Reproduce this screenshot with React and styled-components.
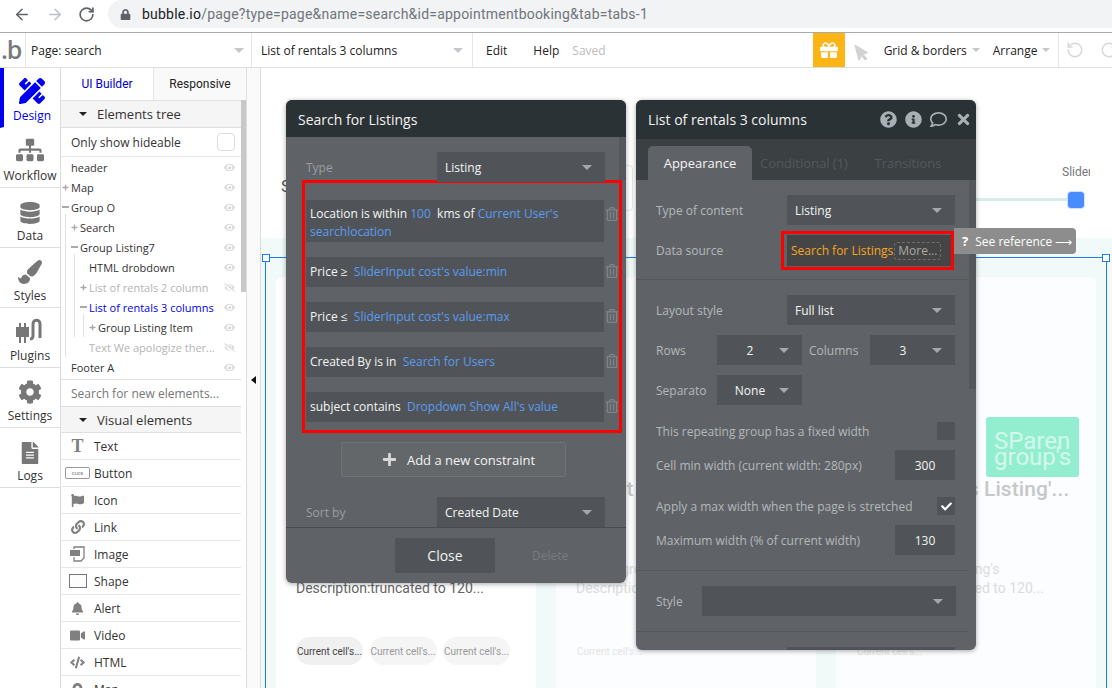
import React from 'react'
import styled, { createGlobalStyle } from 'styled-components'
import { ArrowLeft, ArrowRight, RotateCw, RotateCcw } from 'lucide-react'
import {
  FaPencilRuler, FaSitemap, FaDatabase, FaPaintBrush, FaCog, FaFileAlt, FaEye, FaEyeSlash,
  FaFlag, FaLink, FaBell, FaVideo, FaCode, FaMapMarkerAlt, FaRegTrashAlt, FaQuestionCircle,
  FaInfoCircle, FaRegComment, FaTimes, FaCheck, FaGift, FaMousePointer, FaPlus, FaLock,
} from 'react-icons/fa'

const Global = createGlobalStyle`
html, body { margin: 0; padding: 0; overflow: hidden; background: #fff; }
* { box-sizing: border-box; }
#root { width: 1112px; height: 688px; overflow: hidden; font-family: "Open Sans", "Liberation Sans", sans-serif; font-size: 12px; color: #333; }
`

const Page = styled.div`
width: 1112px;
height: 688px;
display: flex;
flex-direction: column;
overflow: hidden;
`

/* browser bar */
const Chrome = styled.div`
height: 33px;
flex: none;
display: flex;
align-items: flex-start;
padding-left: 13px;
border-bottom: 1px solid #aaa;
background: #fff;
`
const NavIcon = styled.div`
width: 18px;
height: 28px;
margin-right: ${p => p.$gap}px;
display: flex;
align-items: center;
justify-content: center;
color: ${p => p.$color};
`
const Address = styled.div`
flex: 1;
height: 28px;
margin-left: 13px;
padding-left: 12px;
display: flex;
align-items: center;
gap: 11px;
background: #f1f3f4;
border-radius: 14px 0 0 14px;
color: #5f6368;
`
const Url = styled.span`
font-family: Roboto, "Liberation Sans", sans-serif;
font-size: 14px;
letter-spacing: 0.22px;
color: #70757a;
b { font-weight: 400; color: #202124; }
`

/* bubble toolbar */
const Toolbar = styled.div`
height: 35px;
flex: none;
display: flex;
align-items: center;
overflow: hidden;
white-space: nowrap;
border-bottom: 1px solid #ddd;
background: #fff;
color: #222;
& > * { flex: none; }
`
const Logo = styled.div`
width: 26px;
height: 34px;
border-right: 1px solid #e5e5e5;
font-size: 25px;
line-height: 32px;
font-weight: 600;
color: #77797b;
letter-spacing: -1px;
padding-left: 1px;
`
const Caret = styled.i`
display: block;
flex: none;
width: 0;
height: 0;
border-left: ${p => p.$w || 5}px solid transparent;
border-right: ${p => p.$w || 5}px solid transparent;
border-top: ${p => p.$w || 5}px solid ${p => p.$color || '#c4c8cc'};
`
const ToolSelect = styled.div`
width: ${p => p.$w}px;
height: 34px;
padding: 0 ${p => p.$pr}px 0 ${p => p.$pl}px;
display: flex;
align-items: center;
justify-content: space-between;
border-right: 1px solid #e5e5e5;
`
const MenuItem = styled.span`
margin-left: ${p => p.$ml}px;
color: ${p => p.$color || '#222'};
`
const GiftBox = styled.div`
width: 32px;
height: 34px;
margin-left: ${p => p.$ml}px;
display: flex;
align-items: center;
justify-content: center;
background: #fdb515;
color: #fff;
font-size: 18px;
`
const CursorIcon = styled.div`
width: 20px;
margin: 3px 0 0 8px;
color: #d2d2d2;
font-size: 18px;
display: flex;
svg { transform: rotate(-15deg); }
`
const ToolDrop = styled.div`
margin-left: ${p => p.$ml}px;
display: flex;
align-items: center;
gap: 5px;
`
const History = styled.div`
height: 34px;
margin-left: 8px;
padding-left: 7px;
display: flex;
align-items: center;
gap: 16px;
border-left: 1px solid #e5e5e5;
color: #d8d8d8;
svg { flex: none; }
`

const Main = styled.div`
flex: 1;
min-height: 0;
display: flex;
`

/* left rail */
const Rail = styled.nav`
width: 61px;
flex: none;
border-right: 1px solid #ddd;
`
const RailItem = styled.div`
height: 60px;
display: flex;
flex-direction: column;
align-items: center;
justify-content: flex-end;
padding-bottom: 3px;
border-bottom: 1px solid ${p => p.$active ? 'transparent' : '#ddd'};
border-left: ${p => p.$active ? '4px solid #0000ee' : 'none'};
color: ${p => p.$active ? '#0000ee' : '#333'};
svg { color: ${p => p.$active ? '#0000ee' : '#777'}; margin-bottom: 3px; }
`

/* left panel */
const Panel = styled.aside`
width: 186px;
flex: none;
position: relative;
border-right: 1px solid #ddd;
overflow: hidden;
`
const PanelTabs = styled.div`
height: 33px;
display: flex;
border-bottom: 1px solid #e0e0e0;
`
const PanelTab = styled.div`
flex: 1;
display: flex;
align-items: center;
justify-content: center;
font-family: Roboto, "Liberation Sans", sans-serif;
color: ${p => p.$active ? '#0000cc' : '#222'};
background: ${p => p.$active ? '#fff' : '#f9f9f9'};
border-left: ${p => p.$active ? 'none' : '1px solid #e5e5e5'};
`
const PanelBody = styled.div`
width: 180px;
`
const SectionHead = styled.div`
height: ${p => p.$h}px;
display: flex;
align-items: center;
gap: 10px;
padding-left: 18px;
background: #f5f5f5;
border-bottom: 1px solid #e0e0e0;
font-size: 13px;
color: #333;
`
const HideRow = styled.div`
height: 29px;
display: flex;
align-items: center;
justify-content: space-between;
padding: 0 6px 0 10px;
border-bottom: 1px solid #e8e8e8;
`
const HideBox = styled.span`
width: 18px;
height: 18px;
border: 1px solid #ddd;
border-radius: 4px;
background: #fff;
`
const Tree = styled.div`
height: 223px;
position: relative;
border-bottom: 1px solid #ddd;
`
const Branch = styled.div`
position: relative;
&::before {
  content: "";
  position: absolute;
  left: ${p => p.$x}px;
  top: -3px;
  bottom: ${p => p.$bottom || 0}px;
  width: 1px;
  background: #e2e2e2;
}
`
const TreeRow = styled.div`
height: 20px;
display: flex;
align-items: center;
padding: 0 6px 0 ${p => 1 + p.$level * 9}px;
font-size: 11px;
color: ${p => p.$tone === 'off' ? '#b4b4b4' : p.$tone === 'on' ? '#0000ee' : '#333'};
`
const Toggle = styled.span`
width: 9px;
flex: none;
display: flex;
color: #aaa;
font-size: 7px;
`
const Minus = styled.i`
display: block;
width: 7px;
height: 2px;
background: #aaa;
`
const TreeName = styled.span`
flex: 1;
white-space: nowrap;
overflow: hidden;
`
const EyeWrap = styled.span`
display: flex;
font-size: 11px;
color: #dcdcdc;
`
const NewSearch = styled.div`
height: 27px;
display: flex;
align-items: center;
padding-left: 10px;
border-bottom: 1px solid #ddd;
color: #777;
`
const ElementRow = styled.div`
height: 27px;
display: flex;
align-items: center;
border-bottom: 1px solid #e8e8e8;
color: #333;
`
const ElementIcon = styled.span`
width: 33px;
flex: none;
display: flex;
justify-content: center;
color: #808080;
font-size: 13px;
`
const SerifT = styled.span`
font-family: "Liberation Serif", serif;
font-weight: 700;
font-size: 18px;
line-height: 18px;
color: #808080;
`
const ClickBtn = styled.span`
width: 25px;
height: 12px;
display: flex;
align-items: center;
justify-content: center;
border: 1px solid #999;
border-radius: 2px;
font-size: 4px;
font-weight: 700;
color: #888;
`
const ShapeBox = styled.span`
width: 18px;
height: 14px;
border: 1px solid #777;
background: #fdfdfd;
`
const Scrollbar = styled.div`
position: absolute;
left: 180px;
top: 32px;
width: 5px;
height: 192px;
background: #c8c8c8;
`

const Strip = styled.div`
width: 14px;
flex: none;
display: flex;
align-items: flex-start;
justify-content: center;
padding-top: 308px;
background: #fafafa;
border-right: 1px solid #ddd;
`
const CollapseArrow = styled.i`
display: block;
width: 0;
height: 0;
border-top: 4px solid transparent;
border-bottom: 4px solid transparent;
border-right: 5px solid #111;
`

/* editor canvas */
const Canvas = styled.div`
flex: 1;
position: relative;
overflow: hidden;
background: #fff;
`
const SearchLabel = styled.div`
position: absolute;
left: 20px;
top: 109px;
font-family: Roboto, "Liberation Sans", sans-serif;
font-size: 16px;
color: #555;
`
const SearchField = styled.div`
position: absolute;
left: 150px;
top: 97px;
width: 222px;
height: 46px;
border: 1px solid #dcebe8;
border-radius: 4px;
`
const SliderLabel = styled.div`
position: absolute;
left: 801px;
top: 97px;
width: 28px;
overflow: hidden;
white-space: nowrap;
font-family: Roboto, "Liberation Sans", sans-serif;
color: #777;
`
const SliderTrack = styled.div`
position: absolute;
left: 700px;
top: 130px;
width: 110px;
height: 3px;
background: #d5eeea;
`
const SliderThumb = styled.div`
position: absolute;
left: 806px;
top: 123px;
width: 18px;
height: 18px;
border: 1px solid #cfe3ff;
border-radius: 4px;
background: #4a8cff;
`
const PageRegion = styled.div`
position: absolute;
left: 0;
right: 0;
top: 170px;
bottom: 0;
padding: 39px 0 0 15px;
display: flex;
gap: 20px;
background: #f2faf9;
`
const Card = styled.div`
width: 260px;
height: 500px;
padding-left: 20px;
flex: none;
border-radius: 6px 6px 0 0;
background: ${p => p.$faded ? '#fbfdfe' : '#fff'};
font-family: Roboto, "Liberation Sans", sans-serif;
`
const CardLogo = styled.div`
width: 93px;
height: 60px;
margin: 140px 0 0 130px;
padding: 16px 8px 0;
overflow: hidden;
border-radius: 3px;
background: #93eed0;
color: rgba(255, 255, 255, 0.6);
font-size: 24px;
line-height: 16px;
white-space: nowrap;
`
const CardTitle = styled.div`
height: 25px;
margin-left: ${p => p.$shift || 0}px;
font-size: 21px;
line-height: 25px;
font-weight: 500;
letter-spacing: 0.08px;
color: ${p => p.$faded ? '#c6c8c8' : '#555'};
white-space: nowrap;
`
const CardDesc = styled.div`
margin-top: 58px;
font-size: 14px;
line-height: 19px;
color: ${p => p.$faded ? '#dcdcdc' : '#666'};
white-space: nowrap;
`
const ChipRow = styled.div`
margin-top: 39px;
display: flex;
gap: 6.5px;
`
const Chip = styled.div`
width: 67px;
height: 28px;
display: flex;
align-items: center;
justify-content: center;
border-radius: 14px;
font-size: 10px;
background: ${p => p.$first ? '#f0f0f0' : p.$faded ? 'transparent' : '#f5f5f5'};
color: ${p => p.$faded ? '#e4e4e4' : p.$first ? '#444' : '#999'};
`
const Frame = styled.div`
position: absolute;
left: 4px;
top: 189px;
width: 842px;
height: 600px;
border: 1px solid #1a7fe8;
`
const Handle = styled.i`
position: absolute;
top: -4px;
${p => p.$side}: -4px;
width: 8px;
height: 8px;
border: 1px solid #1a7fe8;
background: #fff;
`

/* floating palettes */
const Palette = styled.section`
position: absolute;
left: ${p => p.$left}px;
top: 32px;
width: 340px;
height: ${p => p.$h}px;
display: flex;
flex-direction: column;
overflow: hidden;
border-radius: 6px;
background: #5f6367;
box-shadow: 0 1px 5px rgba(0, 0, 0, 0.35);
`
const PaletteHead = styled.header`
height: ${p => p.$h}px;
flex: none;
display: flex;
align-items: center;
justify-content: space-between;
padding: ${p => p.$pt || 0}px 4px 0 12px;
background: #2b3235;
color: #f2f2f2;
font-size: 14px;
`
const HeadIcons = styled.div`
display: flex;
align-items: center;
gap: 8px;
color: #a9b0b5;
font-size: 17px;
svg { display: block; }
`
const PaletteTabs = styled.div`
height: 41px;
flex: none;
display: flex;
align-items: flex-end;
padding-left: 12px;
background: #3b4043;
`
const PaletteTab = styled.div`
height: 34px;
width: ${p => p.$w}px;
margin-left: ${p => p.$ml || 0}px;
display: flex;
align-items: center;
justify-content: center;
border-radius: 5px 5px 0 0;
font-size: 13px;
background: ${p => p.$active ? '#5f6367' : 'transparent'};
color: ${p => p.$active ? '#f4f4f4' : '#54595c'};
`
const PaletteBody = styled.div`
flex: 1;
min-height: 0;
overflow: hidden;
padding: ${p => p.$top}px 21px 0 20px;
`
const PaletteThumb = styled.div`
position: absolute;
left: 333px;
top: ${p => p.$top}px;
width: 7px;
height: ${p => p.$h}px;
background: #54585b;
`
const Field = styled.div`
display: flex;
align-items: center;
justify-content: ${p => p.$justify || 'space-between'};
margin-top: ${p => p.$top || 0}px;
`
const FieldLabel = styled.span`
width: ${p => p.$w ? p.$w + 'px' : 'auto'};
margin-left: ${p => p.$ml || 0}px;
flex: none;
color: ${p => p.$dim ? '#9a9ea1' : '#b4b8bb'};
white-space: nowrap;
`
const Select = styled.div`
width: ${p => p.$w}px;
height: 30px;
flex: none;
margin-right: ${p => p.$mr || 0}px;
padding: 0 13px 0 ${p => p.$center ? 4 : 8}px;
display: flex;
align-items: center;
justify-content: space-between;
background: #505458;
color: #f4f4f4;
`
const SelectValue = styled.span`
flex: ${p => p.$center ? 1 : '0 1 auto'};
text-align: ${p => p.$center ? 'center' : 'left'};
`
const NumberBox = styled.div`
width: 60px;
height: 30px;
display: flex;
align-items: center;
justify-content: center;
background: #505458;
color: #f4f4f4;
`
const CheckBox = styled.div`
width: 18px;
height: 18px;
display: flex;
align-items: center;
justify-content: center;
background: #505458;
color: #fff;
font-size: 11px;
`
const Divider = styled.hr`
height: 1px;
margin: ${p => p.$top}px -14px 0 -20px;
border: 0;
background: #54585b;
`
const ConstraintBox = styled.div`
width: 320px;
height: 253px;
margin: -2px 0 0 -4px;
padding: 17px 0 0 1px;
display: flex;
flex-direction: column;
gap: 15px;
border: 3px solid #f00;
`
const ConstraintRow = styled.div`
display: flex;
align-items: flex-start;
`
const ConstraintText = styled.div`
width: 298px;
min-height: 30px;
padding: ${p => p.$tall ? '5px 4px 1px' : '6px 4px'};
background: #505458;
color: #f4f4f4;
line-height: 18px;
span { color: #5b9cf0; }
`
const TrashWrap = styled.span`
margin: 7px 0 0 1px;
display: flex;
color: #7f8487;
font-size: 14px;
`
const AddButton = styled.div`
width: 225px;
height: 35px;
margin: 9px 0 0 35px;
padding-left: 10px;
display: flex;
align-items: center;
justify-content: center;
gap: 10px;
border: 1px solid #6f7376;
border-radius: 2px;
background: #63676a;
color: #f2f2f2;
font-size: 13px;
svg { color: #d8d8d8; font-size: 15px; }
`
const PaletteFoot = styled.footer`
height: 56px;
flex: none;
display: flex;
align-items: flex-start;
padding: 10px 0 0 109px;
border-top: 1px solid #484c4f;
`
const CloseButton = styled.div`
width: 100px;
height: 35px;
display: flex;
align-items: center;
justify-content: center;
background: #505458;
color: #f2f2f2;
font-size: 14px;
`
const DeleteLabel = styled.span`
margin: 9px 0 0 37px;
color: #777b7e;
`
const SourceBox = styled.div`
width: 173px;
height: 39px;
margin-right: 1px;
padding: 1px 0 1px 3px;
border: 3px solid #f00;
`
const SourceValue = styled.div`
height: 100%;
padding-left: 4px;
display: flex;
align-items: center;
background: #454545;
color: #f5a623;
`
const MoreTag = styled.span`
height: 18px;
margin-left: 1px;
padding: 0 3px;
display: flex;
align-items: center;
border: 1px dashed #6e6e6e;
border-radius: 3px;
color: #a8a8a8;
`
const Tooltip = styled.div`
position: absolute;
left: 693px;
top: 160px;
width: 122px;
height: 26px;
display: flex;
align-items: center;
gap: 7px;
padding-left: 8px;
border-radius: 0 4px 4px 0;
background: #8d8d8d;
color: #fff;
b { font-size: 13px; }
`

const PlugIcon = () => (
  <svg width="30" height="26" viewBox="0 0 30 26" fill="none">
    <path d="M1 9h13v10H11v6H9v-6H6v6H4v-6H1z" fill="#777" />
    <path d="M5 9V5M10 9V5" stroke="#777" strokeWidth="2" />
    <path d="M15 21c3 0 3-2 3-5V6c0-5 7-5 7 0v14" stroke="#777" strokeWidth="3" />
  </svg>
)

const ImageIcon = () => (
  <svg width="18" height="16" viewBox="0 0 18 16" fill="none">
    <path d="M5 3V1h10v11l-3 3H5v-4" stroke="#808080" strokeWidth="1.3" />
    <rect x="1" y="4" width="10" height="6" fill="#808080" />
  </svg>
)

const railItems = [
  { label: 'Design', icon: <FaPencilRuler size={26} />, active: true },
  { label: 'Workflow', icon: <FaSitemap size={28} /> },
  { label: 'Data', icon: <FaDatabase size={22} /> },
  { label: 'Styles', icon: <FaPaintBrush size={24} /> },
  { label: 'Plugins', icon: <PlugIcon /> },
  { label: 'Settings', icon: <FaCog size={24} /> },
  { label: 'Logs', icon: <FaFileAlt size={22} /> },
]

const elements = [
  ['Text', <SerifT>T</SerifT>],
  ['Button', <ClickBtn>CLICK</ClickBtn>],
  ['Icon', <FaFlag />],
  ['Link', <FaLink size={14} />],
  ['Image', <ImageIcon />],
  ['Shape', <ShapeBox />],
  ['Alert', <FaBell />],
  ['Video', <FaVideo size={15} />],
  ['HTML', <FaCode size={15} />],
  ['Map', <FaMapMarkerAlt />],
]

const Row = ({ level = 0, mark, tone, hidden, children }) => (
  <TreeRow $level={level} $tone={tone}>
    <Toggle>{mark === '+' ? <FaPlus /> : mark === '-' ? <Minus /> : null}</Toggle>
    <TreeName>{children}</TreeName>
    <EyeWrap>{hidden ? <FaEyeSlash /> : <FaEye />}</EyeWrap>
  </TreeRow>
)

const Drop = ({ w, children, center, mr }) => (
  <Select $w={w} $center={center} $mr={mr}>
    <SelectValue $center={center}>{children}</SelectValue>
    <Caret $color="#a3a8ac" />
  </Select>
)

const Constraint = ({ tall, children }) => (
  <ConstraintRow>
    <ConstraintText $tall={tall}>{children}</ConstraintText>
    <TrashWrap><FaRegTrashAlt /></TrashWrap>
  </ConstraintRow>
)

const ListingCard = ({ faded, first, line, shift }) => (
  <Card $faded={faded}>
    <CardLogo>SParen<br />group's</CardLogo>
    <CardTitle $faded={faded} $shift={shift}>Current cell's Listing'...</CardTitle>
    <CardDesc $faded={faded}>
      {line}<br />
      Description:truncated to 120...
    </CardDesc>
    <ChipRow>
      <Chip $first={first} $faded={faded}>Current cell's...</Chip>
      <Chip $faded={faded}>{faded ? '' : "Current cell's..."}</Chip>
      <Chip $faded={faded}>{faded ? '' : "Current cell's..."}</Chip>
    </ChipRow>
  </Card>
)

const App = () => {
  return (
    <Page>
      <Global />
      <Chrome>
        <NavIcon $gap={15} $color="#5f6368"><ArrowLeft size={19} /></NavIcon>
        <NavIcon $gap={13} $color="#bdc1c6"><ArrowRight size={19} /></NavIcon>
        <NavIcon $gap={0} $color="#5f6368"><RotateCw size={17} strokeWidth={2.4} /></NavIcon>
        <Address>
          <FaLock size={11} />
          <Url><b>bubble.io</b>/page?type=page&amp;name=search&amp;id=appointmentbooking&amp;tab=tabs-1</Url>
        </Address>
      </Chrome>

      <Toolbar>
        <Logo>.b</Logo>
        <ToolSelect $w={226} $pl={5} $pr={7}>Page: search<Caret /></ToolSelect>
        <ToolSelect $w={221} $pl={9} $pr={9}>List of rentals 3 columns<Caret /></ToolSelect>
        <MenuItem $ml={13}>Edit</MenuItem>
        <MenuItem $ml={26}>Help</MenuItem>
        <MenuItem $ml={13} $color="#bbb">Saved</MenuItem>
        <GiftBox $ml={207}><FaGift /></GiftBox>
        <CursorIcon><FaMousePointer /></CursorIcon>
        <ToolDrop $ml={11}>Grid &amp; borders<Caret $w={4} /></ToolDrop>
        <ToolDrop $ml={13}>Arrange<Caret $w={4} /></ToolDrop>
        <History><RotateCcw size={18} /><RotateCw size={18} /></History>
      </Toolbar>

      <Main>
        <Rail>
          {railItems.map(item => (
            <RailItem key={item.label} $active={item.active}>
              {item.icon}
              {item.label}
            </RailItem>
          ))}
        </Rail>

        <Panel>
          <PanelTabs>
            <PanelTab $active>UI Builder</PanelTab>
            <PanelTab>Responsive</PanelTab>
          </PanelTabs>
          <PanelBody>
            <SectionHead $h={27}><Caret $w={4} $color="#222" />Elements tree</SectionHead>
            <HideRow>Only show hideable<HideBox /></HideRow>
            <Tree>
              <Row>header</Row>
              <Row mark="+">Map</Row>
              <Row mark="-">Group O</Row>
              <Branch $x={4} $bottom={0}>
                <Row level={1} mark="+">Search</Row>
                <Row level={1} mark="-">Group Listing7</Row>
                <Branch $x={13} $bottom={20}>
                  <Row level={2}>HTML drobdown</Row>
                  <Row level={2} mark="+" tone="off" hidden>List of rentals 2 column</Row>
                  <Row level={2} mark="-" tone="on">List of rentals 3 columns</Row>
                  <Branch $x={22} $bottom={0}>
                    <Row level={3} mark="+">Group Listing Item</Row>
                  </Branch>
                  <Row level={2} tone="off" hidden>Text We apologize ther...</Row>
                </Branch>
              </Branch>
              <Row>Footer A</Row>
            </Tree>
            <NewSearch>Search for new elements...</NewSearch>
            <SectionHead $h={26}><Caret $w={4} $color="#222" />Visual elements</SectionHead>
            {elements.map(([name, icon]) => (
              <ElementRow key={name}>
                <ElementIcon>{icon}</ElementIcon>
                <span>{name}</span>
              </ElementRow>
            ))}
          </PanelBody>
          <Scrollbar />
        </Panel>

        <Strip><CollapseArrow /></Strip>

        <Canvas>
          <SearchLabel>Search</SearchLabel>
          <SearchField />
          <SliderLabel>Slider</SliderLabel>
          <SliderTrack />
          <SliderThumb />
          <PageRegion>
            <ListingCard first line="Current cell's Listing's" />
            <ListingCard faded line="Listing group's" shift={-13} />
            <ListingCard faded line={"Current user's\u00a0 Listing's"} />
          </PageRegion>
          <Frame>
            <Handle $side="left" />
            <Handle $side="right" />
          </Frame>

          <Palette $left={25} $h={483}>
            <PaletteHead $h={37} $pt={1}>Search for Listings</PaletteHead>
            <PaletteBody $top={15}>
              <Field>
                <FieldLabel $dim>Type</FieldLabel>
                <Drop w={168}>Listing</Drop>
              </Field>
              <ConstraintBox>
                <Constraint tall>Location is within <span>100</span> &nbsp;kms of <span>Current User's searchlocation</span></Constraint>
                <Constraint>Price ≥ &nbsp;<span>SliderInput cost's value:min</span></Constraint>
                <Constraint>Price ≤ &nbsp;<span>SliderInput cost's value:max</span></Constraint>
                <Constraint>Created By is in &nbsp;<span>Search for Users</span></Constraint>
                <Constraint>subject contains &nbsp;<span>Dropdown Show All's value</span></Constraint>
              </ConstraintBox>
              <AddButton><FaPlus />Add a new constraint</AddButton>
              <Field $top={20}>
                <FieldLabel $dim>Sort by</FieldLabel>
                <Drop w={168}>Created Date</Drop>
              </Field>
            </PaletteBody>
            <PaletteFoot>
              <CloseButton>Close</CloseButton>
              <DeleteLabel>Delete</DeleteLabel>
            </PaletteFoot>
            <PaletteThumb $top={37} $h={43} />
          </Palette>

          <Palette $left={375} $h={550}>
            <PaletteHead $h={39}>
              List of rentals 3 columns
              <HeadIcons>
                <FaQuestionCircle />
                <FaInfoCircle />
                <FaRegComment />
                <FaTimes />
              </HeadIcons>
            </PaletteHead>
            <PaletteTabs>
              <PaletteTab $active $w={104}>Appearance</PaletteTab>
              <PaletteTab $w={104}>Conditional (1)</PaletteTab>
              <PaletteTab $w={84} $ml={10}>Transitions</PaletteTab>
            </PaletteTabs>
            <PaletteBody $top={15}>
              <Field>
                <FieldLabel>Type of content</FieldLabel>
                <Drop w={168}>Listing</Drop>
              </Field>
              <Field $top={6}>
                <FieldLabel>Data source</FieldLabel>
                <SourceBox>
                  <SourceValue>Search for Listings<MoreTag>More...</MoreTag></SourceValue>
                </SourceBox>
              </Field>
              <Divider $top={9} />
              <Field $top={15}>
                <FieldLabel>Layout style</FieldLabel>
                <Drop w={168}>Full list</Drop>
              </Field>
              <Field $top={10}>
                <FieldLabel $w={61}>Rows</FieldLabel>
                <Drop w={85} center>2</Drop>
                <FieldLabel $w={61} $ml={7}>Columns</FieldLabel>
                <Drop w={85} center>3</Drop>
              </Field>
              <Field $top={10} $justify="flex-start">
                <FieldLabel $w={61}>Separato</FieldLabel>
                <Drop w={85} center>None</Drop>
              </Field>
              <Field $top={17}>
                <FieldLabel>This repeating group has a fixed width</FieldLabel>
                <CheckBox />
              </Field>
              <Field $top={10}>
                <FieldLabel>Cell min width (current width: 280px)</FieldLabel>
                <NumberBox>300</NumberBox>
              </Field>
              <Field $top={17}>
                <FieldLabel>Apply a max width when the page is stretched</FieldLabel>
                <CheckBox><FaCheck /></CheckBox>
              </Field>
              <Field $top={10}>
                <FieldLabel>Maximum width (% of current width)</FieldLabel>
                <NumberBox>130</NumberBox>
              </Field>
              <Divider $top={15} />
              <Field $top={15}>
                <FieldLabel>Style</FieldLabel>
                <Drop w={254} mr={-1} />
              </Field>
              <Divider $top={15} />
              <Field $top={15} $justify="flex-end">
                <Select $w={168} />
              </Field>
            </PaletteBody>
            <PaletteThumb $top={80} $h={209} />
          </Palette>

          <Tooltip><b>?</b>See reference ⟶</Tooltip>
        </Canvas>
      </Main>
    </Page>
  )
}

export default App
